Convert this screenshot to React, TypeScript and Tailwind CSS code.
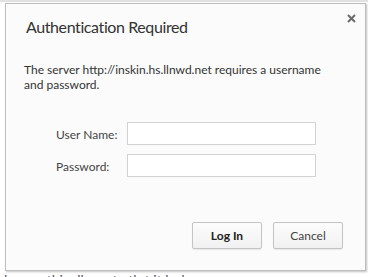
import React from "react";

export default function App() {
  const font = { fontFamily: 'Lato, "Open Sans", sans-serif' };
  return (
    <div className="w-[368px] h-[277px] overflow-hidden bg-white relative" style={font}>
      <div className="h-[2px] bg-[#e1e1e1]" />
      <div className="pl-[5px] pt-[1px]">
        <div className="w-[361px] h-[268px] bg-[#fbfbfb] border border-[#bdbdbd] shadow-[1px_1px_2px_rgba(0,0,0,0.25)] relative flex flex-col">
          <button className="absolute right-[9px] top-[9px] w-[10px] h-[10px] flex items-center justify-center">
            <svg width="9" height="9" viewBox="0 0 9 9">
              <path d="M1 1 L8 8 M8 1 L1 8" stroke="#6b6b6b" strokeWidth="2" />
            </svg>
          </button>
          <div className="pl-[20px] pt-[13px] text-[16px] leading-[20px] tracking-[-0.4px] text-[#333]">Authentication Required</div>
          <div className="pl-[18px] mt-[25px] text-[12px] leading-[15px] text-[#333] w-[320px]">
            The server http://inskin.hs.llnwd.net requires a username and password.
          </div>
          <div className="mt-[30px] grid grid-cols-[71px_189px] gap-y-[9px] pl-[50px]">
            <div className="pt-[5px] text-[12px] leading-[15px] text-[#444]">User Name:</div>
            <input className="h-[23px] bg-white border border-[#d2d2d2] outline-none" />
            <div className="pt-[5px] text-[12px] leading-[15px] text-[#444]">Password:</div>
            <input type="password" className="h-[23px] bg-white border border-[#d2d2d2] outline-none" />
          </div>
          <div className="mt-auto mb-[21px] mr-[22px] flex justify-end gap-[11px]">
            <button className="w-[70px] h-[27px] rounded-[2px] border border-[#c4c4c4] bg-gradient-to-b from-[#fcfcfc] to-[#f1f1f1] shadow-[0_1px_1px_rgba(0,0,0,0.08)] text-[12px] font-bold text-[#222]">
              Log In
            </button>
            <button className="w-[70px] h-[27px] rounded-[2px] border border-[#c4c4c4] bg-gradient-to-b from-[#fcfcfc] to-[#f1f1f1] shadow-[0_1px_1px_rgba(0,0,0,0.08)] text-[12px] text-[#444]">
              Cancel
            </button>
          </div>
        </div>
      </div>
      <div className="pl-[4px] mt-[1px] text-[14px] leading-[16px] text-[#556] whitespace-nowrap">
        l&nbsp;&nbsp;&nbsp;&nbsp;&nbsp;&nbsp;&nbsp;&nbsp;&nbsp;&nbsp;&nbsp;thi&nbsp;&nbsp;&nbsp;&nbsp;ll&nbsp;&nbsp;&nbsp;&nbsp;&nbsp;&nbsp;&nbsp;&nbsp;t&nbsp;&nbsp;&nbsp;th t it h d
      </div>
    </div>
  );
}
